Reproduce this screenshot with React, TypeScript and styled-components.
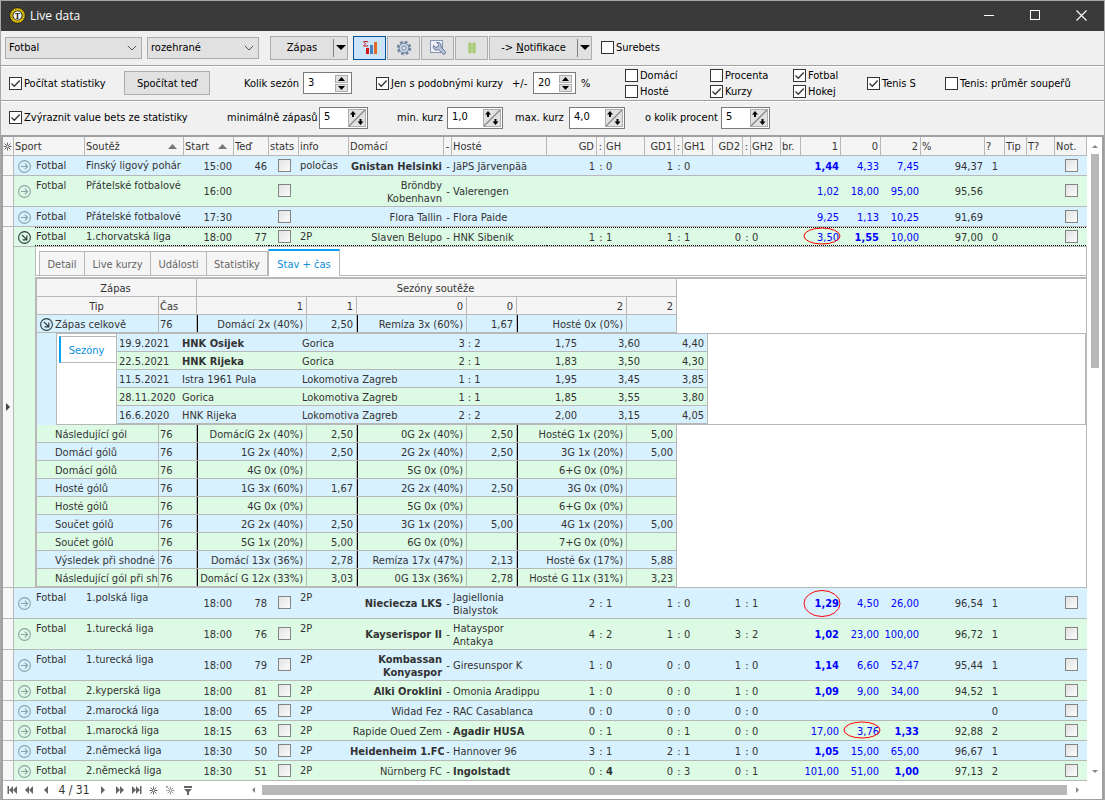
import React from "react";
import styled, { createGlobalStyle, css } from "styled-components";

const LINE = "#b8b8b8";
const BLUE_ROW = "#d8f1ff";
const GREEN_ROW = "#ddfbe4";
const HEAD = "#f5f5f5";
const FONT = '"DejaVu Sans Condensed", "Noto Sans", sans-serif';

type Tone = "blue" | "green";
const toneColor = (t: Tone) => (t === "blue" ? BLUE_ROW : GREEN_ROW);

const GlobalStyle = createGlobalStyle`
  *, *::before, *::after { box-sizing: border-box; }
  body { margin: 0; background: #fff; }
  button, input, select { font: inherit; color: inherit; margin: 0; }
`;

/* ---------- window frame ---------- */

const Window = styled.div`
  display: flex;
  flex-direction: column;
  min-height: 100vh;
  border: 1px solid #a8a8a8;
  background: #f0f0f0;
  font: 11px/13px ${FONT};
  color: #000;
`;

const TitleBar = styled.header`
  display: flex;
  align-items: center;
  height: 30px;
  padding: 0 0 1px 8px;
  background: #3a3a3a;
  color: #fff;
`;

const Title = styled.h1`
  flex: 1;
  margin: 0 0 0 4px;
  font: 12px/16px "Open Sans", "Noto Sans", sans-serif;
`;

const WindowButton = styled.button`
  display: grid;
  place-items: center;
  width: 46px;
  height: 28px;
  padding: 0;
  border: 0;
  background: transparent;
  color: #fff;
`;

/* ---------- tool bars ---------- */

const Bar = styled.div<{ $columns: string; $height: number; $last?: boolean }>`
  display: grid;
  grid-template-columns: ${(p) => p.$columns};
  align-items: center;
  height: ${(p) => p.$height}px;
  white-space: nowrap;
  ${(p) =>
    !p.$last &&
    css`
      border-bottom: 1px solid #fff;
      box-shadow: inset 0 -1px #a0a0a0;
    `}
`;

const MainBar = styled(Bar)`
  padding: 0 4px 2px;
`;

const OptionBar = styled(Bar)`
  padding: 0 8px 2px;
`;

const SelectBox = styled.span<{ $width: number }>`
  display: flex;
  align-items: center;
  width: ${(p) => p.$width}px;
  height: 22px;
  border: 1px solid #adadad;
  background: #e1e1e1;

  select {
    flex: 1;
    height: 20px;
    padding: 0 0 0 3px;
    border: 0;
    background: transparent;
    appearance: none;
  }
  svg {
    margin: 0 4px 0 -20px;
    pointer-events: none;
  }
`;

const PushButton = styled.button<{ $width: number }>`
  width: ${(p) => p.$width}px;
  height: 24px;
  padding: 0;
  border: 1px solid #adadad;
  background: #e1e1e1;
`;

const SplitButton = styled.div<{ $width: number }>`
  display: flex;
  width: ${(p) => p.$width}px;
  height: 24px;
  border: 1px solid #adadad;
  background: #e1e1e1;

  button {
    padding: 0;
    border: 0;
    background: transparent;
  }
  button:first-child {
    flex: 1;
  }
  button:last-child {
    display: grid;
    place-items: center;
    width: 14px;
    margin: 2px 0;
    border-left: 1px solid #808080;
  }
`;

const IconButton = styled.button<{ $active?: boolean }>`
  display: grid;
  place-items: center;
  width: 33px;
  height: 24px;
  padding: 0;
  border: 1px solid ${(p) => (p.$active ? "#00559b" : "#adadad")};
  background: ${(p) => (p.$active ? "#cce4f7" : "#e1e1e1")};
`;

const CheckLabel = styled.label`
  display: flex;
  align-items: center;
  gap: 2px;
`;

const checkMark = `url("data:image/svg+xml,%3Csvg xmlns='http://www.w3.org/2000/svg' viewBox='0 0 11 11'%3E%3Cpath d='M1.5 5.5l2.8 2.8 5.4-5.8' fill='none' stroke='%23333' stroke-width='1.3'/%3E%3C/svg%3E")`;

const CheckInput = styled.input.attrs({ type: "checkbox" })`
  appearance: none;
  flex: none;
  width: 13px;
  height: 13px;
  border: 1px solid #333;
  background: #fff;

  &:checked {
    background: #fff ${checkMark} center / 11px 11px no-repeat;
  }
`;

const GridCheck = styled.input.attrs({ type: "checkbox" })`
  appearance: none;
  display: block;
  width: 13px;
  height: 13px;
  margin: 0 auto 2px;
  border: 1px solid #848484;
  background: linear-gradient(135deg, #e2e2e2, #fbfbfb);
`;

const CheckPair = styled.div`
  display: grid;
  gap: 3px;
`;

const SpinBox = styled.span<{ $width: number }>`
  display: flex;
  align-items: center;
  width: ${(p) => p.$width}px;
  height: 22px;
  border: 1px solid #7a7a7a;
  background: #fff;

  input {
    flex: 1;
    min-width: 0;
    height: 18px;
    padding: 0 0 2px 4px;
    border: 0;
    outline: 0;
    background: transparent;
  }
`;

const StackedArrows = styled.span`
  display: grid;
  gap: 1px;
  margin-right: 3px;

  button {
    display: grid;
    place-items: center;
    width: 13px;
    height: 8px;
    padding: 0;
    border: 1px solid #adadad;
    background: #e1e1e1;
  }
`;

const DiagonalArrows = styled.span`
  position: relative;
  display: flex;
  width: 18px;
  height: 18px;
  margin-right: 1px;

  svg {
    position: absolute;
    inset: 0;
    pointer-events: none;
  }
  button {
    width: 9px;
    padding: 0;
    border: 0;
    background: #e1e1e1;
  }
`;

/* ---------- match grid ---------- */

const GridFrame = styled.main`
  display: flex;
  flex: 1;
  border: 2px solid #a0a0a0;
  border-bottom: 0;
  background: #fff;
  color: #333;
`;

const TableBox = styled.div`
  flex: 1;
  min-width: 0;
`;

const MatchTable = styled.table`
  width: 100%;
  table-layout: fixed;
  border-collapse: separate;
  border-spacing: 0;
  white-space: nowrap;
`;

const HeadCell = styled.th<{ $align?: string }>`
  height: 19px;
  padding: 1px 2px 0 1px;
  overflow: hidden;
  border: 0 solid ${LINE};
  border-width: 0 1px 1px 0;
  background: ${HEAD};
  font-weight: normal;
  text-align: ${(p) => p.$align || "left"};

  > svg {
    display: block;
  }
`;

const NarrowHead = styled(HeadCell)`
  padding-right: 0;
  padding-left: 0;
`;

const HeadSort = styled.span`
  display: flex;
  align-items: center;
  justify-content: space-between;
  padding-right: 4px;
`;

const MatchRow = styled.tr<{ $tone: Tone; $tall?: boolean }>`
  height: ${(p) => (p.$tall ? 31 : 20)}px;
  background: ${(p) => toneColor(p.$tone)};
`;

const Cell = styled.td<{
  $align?: string;
  $top?: boolean;
  $bold?: boolean;
  $odd?: boolean;
  $focus?: boolean;
  $wrap?: boolean;
}>`
  padding: ${(p) => (p.$top ? "3px" : "1px")} ${(p) => (p.$align === "right" ? "2px" : "1px")} 0 1px;
  overflow: hidden;
  border-bottom: 1px solid ${LINE};
  text-align: ${(p) => p.$align || "left"};
  vertical-align: ${(p) => (p.$top ? "top" : "middle")};
  font-weight: ${(p) => (p.$bold ? "bold" : "normal")};
  white-space: ${(p) => (p.$wrap ? "pre" : "nowrap")};
  ${(p) =>
    p.$odd &&
    css`
      color: #00f;
      overflow: visible;
    `}
  ${(p) =>
    p.$focus &&
    css`
      background-image: linear-gradient(90deg, #000 50%, transparent 50%),
        linear-gradient(90deg, #000 50%, transparent 50%);
      background-size: 2px 1px;
      background-repeat: repeat-x;
      background-position: left top, left bottom;
    `}
`;

const IndicatorCell = styled.td`
  padding: 0;
  border: 0 solid ${LINE};
  border-width: 0 1px 1px 0;
  background: #f7f7f7;
  text-align: center;

  svg {
    display: block;
    margin: 0 auto;
  }
`;

const ExpandButton = styled.button<{ $open?: boolean }>`
  display: block;
  margin: 0 auto;
  padding: 0;
  border: 0;
  background: transparent;
  color: ${(p) => (p.$open ? "#2c3a3c" : "#8ba2a6")};

  svg {
    display: block;
  }
`;

const Marked = styled.span`
  position: relative;
  display: inline-block;

  svg {
    position: absolute;
    top: 50%;
    right: -2px;
    transform: translateY(-50%);
    overflow: visible;
  }
`;

/* ---------- detail panel ---------- */

const IndentCell = styled.td`
  padding: 0;
  border-bottom: 1px solid ${LINE};
  background: ${GREEN_ROW};
`;

const DetailCell = styled.td`
  padding: 0;
  border-right: 1px solid ${LINE};
  border-bottom: 1px solid ${LINE};
  background: #fff;
`;

const TabStrip = styled.div`
  display: flex;
  align-items: flex-end;
  height: 29px;
  padding-left: 3px;
  border-bottom: 1px solid ${LINE};
  border-left: 1px solid ${LINE};
`;

const Tab = styled.button<{ $active?: boolean; $width: number }>`
  width: ${(p) => p.$width}px;
  height: ${(p) => (p.$active ? 27 : 24)}px;
  margin-bottom: ${(p) => (p.$active ? -1 : 0)}px;
  padding: 2px 0 0;
  border: 1px solid ${LINE};
  border-bottom: 0;
  border-left-width: ${(p) => (p.$active ? 1 : 0)}px;
  background: ${(p) => (p.$active ? "#fff" : HEAD)};
  color: #666;
  ${(p) =>
    p.$active &&
    css`
      border-top: 2px solid #0aa0f0;
      color: #0a8fdc;
    `}
  &:first-child {
    border-left-width: 1px;
  }
`;

const DetailFrame = styled.div`
  margin-top: 1px;
  border: 2px solid ${LINE};
  border-width: 2px 0 0 2px;
`;

const StatTable = styled.table`
  width: 100%;
  table-layout: fixed;
  border-collapse: separate;
  border-spacing: 0;
`;

const StatHead = styled.th<{ $align?: string }>`
  height: 18px;
  padding: 1px 3px 0 1px;
  border: 0 solid ${LINE};
  border-width: 0 1px 1px 0;
  background: ${HEAD};
  font-weight: normal;
  text-align: ${(p) => p.$align || "left"};
`;

const StatRow = styled.tr<{ $tone: Tone }>`
  height: 18px;
  background: ${(p) => toneColor(p.$tone)};
`;

const StatCell = styled.td<{ $align?: string; $mark?: boolean }>`
  padding: 1px 3px 0 1px;
  overflow: hidden;
  border: 0 solid ${LINE};
  border-width: 0 1px 1px 0;
  text-align: ${(p) => p.$align || "left"};
  ${(p) => p.$mark && "box-shadow: inset 1px 0 #000;"}
`;

const TipCell = styled(StatCell)`
  padding-right: 0;
  padding-left: 0;
`;

const TipText = styled.span`
  display: flex;
  align-items: center;

  > span {
    width: 18px;
    flex: none;
  }
`;

const Spare = styled.td`
  padding: 0;
  background: #fff;
`;

const SeasonCell = styled.td`
  height: 92px;
  padding: 0 0 0 19px;
  background: ${BLUE_ROW};
`;

const SeasonFrame = styled.div`
  display: flex;
  height: 92px;
  border: 1px solid ${LINE};
  background: #fff;
`;

const SeasonTabs = styled.div`
  width: 59px;
  padding: 2px 0 0 2px;
`;

const SeasonTab = styled.button`
  width: 57px;
  height: 27px;
  padding: 1px 4px 0 0;
  border: 1px solid ${LINE};
  border-width: 1px 0;
  border-left: 2px solid #0aa0f0;
  background: #fff;
  color: #0a8fdc;
`;

const SeasonTable = styled.table`
  width: 592px;
  table-layout: fixed;
  border-collapse: separate;
  border-spacing: 0;
  border: 0 solid ${LINE};
  border-width: 0 1px;
`;

const SeasonData = styled.td<{ $align?: string; $bold?: boolean }>`
  padding: 1px 3px 0 2px;
  border-bottom: 1px solid ${LINE};
  text-align: ${(p) => p.$align || "left"};
  font-weight: ${(p) => (p.$bold ? "bold" : "normal")};
`;

/* ---------- scroll bars and navigator ---------- */

const VScroll = styled.div`
  display: flex;
  flex-direction: column;
  align-items: center;
  width: 15px;
  padding: 8px 0 8px 1px;
`;

const VTrack = styled.div`
  flex: 1;
  width: 8px;
  margin: 6px 0;
`;

const VThumb = styled.div`
  height: 35%;
  background: ${LINE};
`;

const Footer = styled.footer`
  display: flex;
  height: 19px;
  border: 2px solid #a0a0a0;
  border-width: 0 2px 1px;
  background: #fff;
  color: #333;
`;

const Navigator = styled.nav`
  display: flex;
  align-items: center;
  width: 242px;

  button {
    display: grid;
    place-items: center;
    width: 17px;
    height: 16px;
    padding: 0;
    border: 0;
    background: transparent;
    color: #666;
  }
`;

const Position = styled.span`
  width: 40px;
  font-size: 12px;
  text-align: center;
`;

const HScroll = styled.div`
  display: flex;
  flex: 1;
  align-items: center;
  gap: 7px;
  padding: 0 23px 0 7px;
`;

const HThumb = styled.div`
  flex: 1;
  height: 10px;
  margin-right: 2px;
  background: ${LINE};
`;

/* ---------- drawings ---------- */

const Triangle = ({ dir, w, h, color = "#000" }: { dir: "up" | "down" | "left" | "right"; w: number; h: number; color?: string }) => {
  const points = {
    up: `0,${h} ${w},${h} ${w / 2},0`,
    down: `0,0 ${w},0 ${w / 2},${h}`,
    left: `${w},0 ${w},${h} 0,${h / 2}`,
    right: `0,0 0,${h} ${w},${h / 2}`,
  }[dir];
  return (
    <svg width={w} height={h} viewBox={`0 0 ${w} ${h}`} aria-hidden="true">
      <polygon points={points} fill={color} />
    </svg>
  );
};

const Chevron = () => (
  <svg width="10" height="6" viewBox="0 0 10 6" aria-hidden="true">
    <path d="M0.8 0.8 5 5 9.2 0.8" fill="none" stroke="#555" strokeWidth="1" />
  </svg>
);

const Asterisk = ({ faded }: { faded?: boolean }) => (
  <svg width="9" height="9" viewBox="0 0 9 9" aria-hidden="true" stroke={faded ? "#999" : "#666"} strokeWidth="1">
    <path d="M4.5 0.5v2.5M4.5 6v2.5M0.5 4.5H3M6 4.5h2.5M1.5 1.5l2 2M5.5 5.5l2 2M7.5 1.5l-2 2M3.5 5.5l-2 2" />
    <circle cx="4.5" cy="4.5" r="1.4" fill="none" />
    {faded && <path d="M0 0.5h2M0.5 0v2" />}
  </svg>
);

const CircleArrow = ({ open }: { open?: boolean }) => (
  <svg width="13" height="13" viewBox="0 0 13 13" fill="none" stroke="currentColor" aria-hidden="true">
    <circle cx="6.5" cy="6.5" r="5.9" strokeWidth="1.1" />
    {open ? (
      <path d="M4 4l4.6 4.6M8.8 4.6v4.2H4.6" strokeWidth="1.2" />
    ) : (
      <path d="M3 6.5h6.5M6.8 3.7l2.8 2.8-2.8 2.8" strokeWidth="1.1" />
    )}
  </svg>
);

const Logo = () => (
  <svg width="17" height="17" viewBox="0 0 17 17" aria-hidden="true">
    <circle cx="8.5" cy="8.5" r="7.8" fill="#e3c50f" stroke="#111" strokeWidth="0.8" />
    <circle cx="8.5" cy="8.5" r="6.6" fill="none" stroke="#6b5c00" strokeWidth="1" strokeDasharray="1 1.6" />
    <circle cx="8.5" cy="8.5" r="5.1" fill="#111" />
    <circle cx="8.5" cy="8.5" r="4.2" fill="#f2f2f2" />
    <text x="8.5" y="11.5" textAnchor="middle" fontSize="8" fontWeight="bold" fontFamily="Liberation Serif, serif" fill="#111">
      T
    </text>
  </svg>
);

const ChartIcon = () => (
  <svg width="16" height="16" viewBox="0 0 16 16" aria-hidden="true">
    <path d="M5.6 2.4V1.5H1.6L3.5 3.8 1.6 6.1h4V5.2" fill="none" stroke="#d0202a" strokeWidth="1" />
    <rect x="4" y="8" width="3" height="6" fill="#d01818" />
    <rect x="8" y="5" width="3" height="9" fill="#4a7fc0" />
    <rect x="12" y="2" width="3" height="12" fill="#e06a24" />
  </svg>
);

const GearIcon = () => (
  <svg width="16" height="16" viewBox="0 0 16 16" aria-hidden="true">
    <circle cx="8" cy="8" r="5.9" fill="none" stroke="#6e82a0" strokeWidth="2.6" strokeDasharray="2.7 1.93" />
    <circle cx="8" cy="8" r="4.9" fill="#cbd7e6" stroke="#6e82a0" strokeWidth="1" />
    <circle cx="8" cy="8" r="2.1" fill="#e8e8e8" stroke="#6e82a0" strokeWidth="1" />
  </svg>
);

const WrenchIcon = () => (
  <svg width="16" height="16" viewBox="0 0 16 16" aria-hidden="true">
    <rect x="0.5" y="0.5" width="12" height="12" fill="#eef2f8" stroke="#8796b0" />
    <path
      d="M6.6 2.6A3.4 3.4 0 0 1 11 7l4 4.2a1.7 1.7 0 0 1-2.4 2.6L8.6 9.6A3.5 3.5 0 0 1 3.4 5.6L5.8 7.3 8 6.7 8.5 4.5z"
      fill="#b4c2d8"
      stroke="#5d6f8f"
      strokeWidth="0.9"
    />
  </svg>
);

const PauseIcon = () => (
  <svg width="8" height="12" viewBox="0 0 8 12" aria-hidden="true" fill="#b5d67c" stroke="#93bd58" strokeWidth="0.8">
    <rect x="0.9" y="0.9" width="2.2" height="10" rx="0.6" />
    <rect x="4.9" y="0.9" width="2.2" height="10" rx="0.6" />
  </svg>
);

const DiagonalIcon = () => (
  <svg width="18" height="18" viewBox="0 0 18 18" aria-hidden="true">
    <rect x="0.5" y="0.5" width="17" height="17" fill="none" stroke="#adadad" />
    <path d="M1 17 17 1" stroke="#8a8a8a" strokeWidth="1.3" />
    <path d="M5 2l3 3.500H6V8H4V5.500H2zM12.500 16l3-3.500h-2V10h-2v2.500h-2z" fill="#000" />
  </svg>
);

const NavIcon = ({ kind }: { kind: string }) => {
  const shapes: Record<string, React.ReactNode> = {
    first: <path d="M0.5 0v8H2V0zM6 0v8L2 4zM10 0v8L6 4z" />,
    priorPage: <path d="M5 0v8L1 4zM9 0v8L5 4z" />,
    prior: <path d="M7 0v8L3 4z" />,
    next: <path d="M3 0v8l4-4z" />,
    nextPage: <path d="M1 0v8l4-4zM5 0v8l4-4z" />,
    last: <path d="M0 0v8l4-4zM4 0v8l4-4zM8 0v8h1.5V0z" />,
    filter: <path d="M1 0h8v2H1zM1 3h8L6 6v3H4V6z" />,
  };
  return (
    <svg width="10" height="9" viewBox="0 0 10 9" fill="currentColor" aria-hidden="true">
      {shapes[kind]}
    </svg>
  );
};

/* ---------- small composites ---------- */

const Check = ({ label, checked }: { label: string; checked?: boolean }) => (
  <CheckLabel>
    <CheckInput defaultChecked={checked} />
    {label}
  </CheckLabel>
);

const Dropdown = ({ label, options, width }: { label: string; options: string[]; width: number }) => (
  <SelectBox $width={width}>
    <select aria-label={label}>
      {options.map((o) => (
        <option key={o}>{o}</option>
      ))}
    </select>
    <Chevron />
  </SelectBox>
);

const Spin = ({ id, value, width, diagonal }: { id: string; value: string; width: number; diagonal?: boolean }) => (
  <SpinBox $width={width}>
    <input id={id} defaultValue={value} />
    {diagonal ? (
      <DiagonalArrows>
        <button aria-label="Zvýšit" />
        <button aria-label="Snížit" />
        <DiagonalIcon />
      </DiagonalArrows>
    ) : (
      <StackedArrows>
        <button aria-label="Zvýšit">
          <Triangle dir="up" w={7} h={4} />
        </button>
        <button aria-label="Snížit">
          <Triangle dir="down" w={7} h={4} />
        </button>
      </StackedArrows>
    )}
  </SpinBox>
);

/* ---------- data ---------- */

type Match = {
  league: string;
  start: string;
  now?: string;
  info?: string;
  home: string;
  away: string;
  win?: "home" | "away";
  scores: (string | null)[];
  boldGuest?: boolean;
  odds: string[];
  fav?: number;
  ring?: number;
  pct: string;
  q?: string;
  tall?: boolean;
};

const before: Match[] = [
  { league: "Finský ligový pohár", start: "15:00", now: "46", info: "poločas", home: "Gnistan Helsinki", away: "JäPS Järvenpää", win: "home", scores: ["1:0", "1:0", null], odds: ["1,44", "4,33", "7,45"], fav: 0, pct: "94,37", q: "1" },
  { league: "Přátelské fotbalové", start: "16:00", home: "Bröndby\nKobenhavn", away: "Valerengen", scores: [null, null, null], odds: ["1,02", "18,00", "95,00"], pct: "95,56", tall: true },
  { league: "Přátelské fotbalové", start: "17:30", home: "Flora Tallin", away: "Flora Paide", scores: [null, null, null], odds: ["9,25", "1,13", "10,25"], pct: "91,69" },
  { league: "1.chorvatská liga", start: "18:00", now: "77", info: "2P", home: "Slaven Belupo", away: "HNK Sibenik", scores: ["1:1", "1:1", "0:0"], odds: ["3,50", "1,55", "10,00"], fav: 1, ring: 0, pct: "97,00", q: "0" },
];

const after: Match[] = [
  { league: "1.polská liga", start: "18:00", now: "78", info: "2P", home: "Nieciecza LKS", away: "Jagiellonia\nBialystok", win: "home", scores: ["2:1", "1:0", "1:1"], odds: ["1,29", "4,50", "26,00"], fav: 0, ring: 0, pct: "96,54", q: "1", tall: true },
  { league: "1.turecká liga", start: "18:00", now: "76", info: "2P", home: "Kayserispor II", away: "Hatayspor\nAntakya", win: "home", scores: ["4:2", "1:0", "3:2"], odds: ["1,02", "23,00", "100,00"], fav: 0, pct: "96,72", q: "1", tall: true },
  { league: "1.turecká liga", start: "18:00", now: "79", info: "2P", home: "Kombassan\nKonyaspor", away: "Giresunspor K", win: "home", scores: ["1:0", "0:0", "1:0"], odds: ["1,14", "6,60", "52,47"], fav: 0, pct: "95,44", q: "1", tall: true },
  { league: "2.kyperská liga", start: "18:00", now: "81", info: "2P", home: "Alki Oroklini", away: "Omonia Aradippu", win: "home", scores: ["1:0", "0:0", "1:0"], odds: ["1,09", "9,00", "34,00"], fav: 0, pct: "94,52", q: "1" },
  { league: "2.marocká liga", start: "18:00", now: "65", info: "2P", home: "Widad Fez", away: "RAC Casablanca", scores: ["0:0", "0:0", "0:0"], odds: ["", "", ""], pct: "", q: "0" },
  { league: "1.marocká liga", start: "18:15", now: "63", info: "2P", home: "Rapide Oued Zem", away: "Agadir HUSA", win: "away", scores: ["0:1", "0:1", "0:0"], odds: ["17,00", "3,76", "1,33"], fav: 2, ring: 1, pct: "92,88", q: "2" },
  { league: "2.německá liga", start: "18:30", now: "50", info: "2P", home: "Heidenheim 1.FC", away: "Hannover 96", win: "home", scores: ["3:1", "2:1", "1:0"], odds: ["1,05", "15,00", "65,00"], fav: 0, pct: "96,67", q: "1" },
  { league: "2.německá liga", start: "18:30", now: "51", info: "2P", home: "Nürnberg FC", away: "Ingolstadt", win: "away", scores: ["0:4", "0:3", "0:1"], boldGuest: true, odds: ["101,00", "51,00", "1,00"], fav: 2, pct: "97,13", q: "2" },
];

/* Zero marks the guest team column, which takes the remaining width. */
const columnWidths = [11, 21, 50, 99, 50, 35, 30, 50, 95, 8, 0, 50, 8, 40, 30, 8, 30, 30, 8, 30, 20, 40, 40, 40, 64, 20, 22, 28, 32];

const stats: string[][] = [
  ["Následující gól", "DomácíG 2x (40%)", "2,50", "0G 2x (40%)", "2,50", "HostéG 1x (20%)", "5,00"],
  ["Domácí gólů", "1G 2x (40%)", "2,50", "2G 2x (40%)", "2,50", "3G 1x (20%)", "5,00"],
  ["Domácí gólů", "4G 0x (0%)", "", "5G 0x (0%)", "", "6+G 0x (0%)", ""],
  ["Hosté gólů", "1G 3x (60%)", "1,67", "2G 2x (40%)", "2,50", "3G 0x (0%)", ""],
  ["Hosté gólů", "4G 0x (0%)", "", "5G 0x (0%)", "", "6+G 0x (0%)", ""],
  ["Součet gólů", "2G 2x (40%)", "2,50", "3G 1x (20%)", "5,00", "4G 1x (20%)", "5,00"],
  ["Součet gólů", "5G 1x (20%)", "5,00", "6G 0x (0%)", "", "7+G 0x (0%)", ""],
  ["Výsledek při shodné", "Domácí 13x (36%)", "2,78", "Remíza 17x (47%)", "2,13", "Hosté 6x (17%)", "5,88"],
  ["Následující gól při sh", "Domácí G 12x (33%)", "3,03", "0G 13x (36%)", "2,78", "Hosté G 11x (31%)", "3,23"],
];

const seasons: string[][] = [
  ["19.9.2021", "HNK Osijek", "Gorica", "3 : 2", "1,75", "3,60", "4,40"],
  ["22.5.2021", "HNK Rijeka", "Gorica", "2 : 1", "1,83", "3,50", "4,30"],
  ["11.5.2021", "Istra 1961 Pula", "Lokomotiva Zagreb", "1 : 1", "1,95", "3,45", "3,85"],
  ["28.11.2020", "Gorica", "Lokomotiva Zagreb", "1 : 1", "1,85", "3,55", "3,80"],
  ["16.6.2020", "HNK Rijeka", "Lokomotiva Zagreb", "2 : 2", "2,00", "3,15", "4,05"],
];

/* ---------- grid parts ---------- */

const MatchLine = ({ m, tone, open }: { m: Match; tone: Tone; open?: boolean }) => (
  <MatchRow $tone={tone} $tall={m.tall}>
    <IndicatorCell rowSpan={open ? 2 : 1}>{open && <Triangle dir="right" w={4} h={8} color="#444" />}</IndicatorCell>
    <Cell>
      <ExpandButton $open={open} aria-label={open ? "Sbalit" : "Rozbalit"}>
        <CircleArrow open={open} />
      </ExpandButton>
    </Cell>
    <Cell $top $focus={open}>Fotbal</Cell>
    <Cell $top $focus={open}>{m.league}</Cell>
    <Cell $align="right" $focus={open}>{m.start}</Cell>
    <Cell $align="right" $focus={open}>{m.now}</Cell>
    <Cell $focus={open}><GridCheck aria-label={`Statistiky ${m.home}`} /></Cell>
    <Cell $top $focus={open}>{m.info}</Cell>
    <Cell $align="right" $wrap $focus={open} $bold={m.win === "home"}>{m.home}</Cell>
    <Cell $align="center" $focus={open}>-</Cell>
    <Cell $wrap $focus={open} $bold={m.win === "away"}>{m.away}</Cell>
    {m.scores.map((s, i) => {
      const [h, g] = s ? s.split(":") : ["", ""];
      return (
        <React.Fragment key={i}>
          <Cell $align="right" $focus={open}>{h}</Cell>
          <Cell $align="center" $focus={open}>{s ? ":" : ""}</Cell>
          <Cell $focus={open} $bold={m.boldGuest && i === 0}>{g}</Cell>
        </React.Fragment>
      );
    })}
    <Cell $focus={open} />
    {m.odds.map((o, i) => (
      <Cell key={i} $align="right" $odd $focus={open} $bold={m.fav === i}>
        {m.ring === i ? (
          <Marked>
            {o}
            <svg width="38" height={m.tall ? 27 : 16} aria-hidden="true">
              <ellipse cx="19" cy={m.tall ? 13 : 7} rx="18" ry={m.tall ? 13 : 8} fill="none" stroke="#f00" />
            </svg>
          </Marked>
        ) : (
          o
        )}
      </Cell>
    ))}
    <Cell $align="right" $focus={open}>{m.pct}</Cell>
    <Cell $align="center" $focus={open}>{m.q}</Cell>
    <Cell $focus={open} />
    <Cell $focus={open} />
    <Cell $focus={open}><GridCheck aria-label={`Notifikace ${m.home}`} /></Cell>
  </MatchRow>
);

const Seasons = () => (
  <SeasonFrame>
    <SeasonTabs>
      <SeasonTab>Sezóny</SeasonTab>
    </SeasonTabs>
    <SeasonTable>
      <colgroup>
        {[63, 120, 142, 56, 82, 63, 64].map((w, i) => (
          <col key={i} width={w} />
        ))}
      </colgroup>
      <tbody>
        {seasons.map((r, i) => (
          <StatRow key={r[0]} $tone={i % 2 ? "green" : "blue"}>
            {r.map((v, c) => (
              <SeasonData key={c} $align={c === 3 ? "center" : c > 3 ? "right" : "left"} $bold={c === 1 && i < 2}>
                {v}
              </SeasonData>
            ))}
          </StatRow>
        ))}
      </tbody>
    </SeasonTable>
  </SeasonFrame>
);

const StatLine = ({ row, tone, open }: { row: string[]; tone: Tone; open?: boolean }) => (
  <StatRow $tone={tone}>
    <TipCell>
      <TipText>
        <span>
          {open && (
            <ExpandButton $open aria-label="Sbalit">
              <CircleArrow open />
            </ExpandButton>
          )}
        </span>
        {row[0]}
      </TipText>
    </TipCell>
    <StatCell>76</StatCell>
    {row.slice(1).map((v, i) => (
      <StatCell key={i} $align="right" $mark={i % 2 === 0}>
        {v}
      </StatCell>
    ))}
    <Spare />
  </StatRow>
);

const Detail = () => (
  <>
    <TabStrip>
      <Tab $width={46}>Detail</Tab>
      <Tab $width={66}>Live kurzy</Tab>
      <Tab $width={56}>Události</Tab>
      <Tab $width={61}>Statistiky</Tab>
      <Tab $width={72} $active>Stav + čas</Tab>
    </TabStrip>
    <DetailFrame>
      <StatTable>
        <colgroup>
          {[122, 38, 110, 50, 110, 50, 110, 50].map((w, i) => (
            <col key={i} width={w} />
          ))}
          <col />
        </colgroup>
        <thead>
          <tr>
            <StatHead colSpan={2} $align="center">Zápas</StatHead>
            <StatHead colSpan={6} $align="center">Sezóny soutěže</StatHead>
            <Spare />
          </tr>
          <tr>
            <StatHead $align="center">Tip</StatHead>
            <StatHead>Čas</StatHead>
            {["1", "1", "0", "0", "2", "2"].map((v, i) => (
              <StatHead key={i} $align="right">{v}</StatHead>
            ))}
            <Spare />
          </tr>
        </thead>
        <tbody>
          <StatLine open tone="blue" row={["Zápas celkově", "Domácí 2x (40%)", "2,50", "Remíza 3x (60%)", "1,67", "Hosté 0x (0%)", ""]} />
          <tr>
            <SeasonCell colSpan={9}>
              <Seasons />
            </SeasonCell>
          </tr>
          {stats.map((row, i) => (
            <StatLine key={i} row={row} tone={i % 2 ? "blue" : "green"} />
          ))}
        </tbody>
      </StatTable>
    </DetailFrame>
  </>
);

const headers: [string, string?][] = [
  ["info"], ["Domácí"], ["-", "center"], ["Hosté"],
  ["GD", "right"], [":", "center"], ["GH"],
  ["GD1", "right"], [":", "center"], ["GH1"],
  ["GD2", "right"], [":", "center"], ["GH2"],
  ["br."], ["1", "right"], ["0", "right"], ["2", "right"],
  ["%"], ["?"], ["Tip"], ["T?"], ["Not."],
];

export default function App() {
  return (
    <Window>
      <GlobalStyle />
      <TitleBar>
        <Logo />
        <Title>Live data</Title>
        <WindowButton aria-label="Minimalizovat">
          <svg width="11" height="11" aria-hidden="true"><path d="M0 5.5h10" stroke="#fff" /></svg>
        </WindowButton>
        <WindowButton aria-label="Maximalizovat">
          <svg width="11" height="11" aria-hidden="true"><rect x="0.5" y="0.5" width="9" height="9" fill="none" stroke="#fff" /></svg>
        </WindowButton>
        <WindowButton aria-label="Zavřít">
          <svg width="11" height="11" aria-hidden="true"><path d="M0.5 0.5l10 10M10.5 0.5l-10 10" stroke="#fff" strokeWidth="1.1" /></svg>
        </WindowButton>
      </TitleBar>

      <MainBar $height={36} $columns="142px 123px 83px 34px 34px 34px 34px 112px 1fr">
        <Dropdown label="Sport" width={137} options={["Fotbal", "Hokej", "Tenis"]} />
        <Dropdown label="Stav zápasů" width={112} options={["rozehrané", "všechny"]} />
        <SplitButton $width={78}>
          <button>Zápas</button>
          <button aria-label="Nabídka zápasu"><Triangle dir="down" w={10} h={5} /></button>
        </SplitButton>
        <IconButton $active aria-label="Statistiky"><ChartIcon /></IconButton>
        <IconButton aria-label="Nastavení"><GearIcon /></IconButton>
        <IconButton aria-label="Nástroje"><WrenchIcon /></IconButton>
        <IconButton aria-label="Pozastavit"><PauseIcon /></IconButton>
        <SplitButton $width={103}>
          <button>-&gt; <u>N</u>otifikace</button>
          <button aria-label="Nabídka notifikací"><Triangle dir="down" w={10} h={5} /></button>
        </SplitButton>
        <Check label="Surebets" />
      </MainBar>

      <OptionBar $height={35} $columns="115px 120px 59px 73px 136px 21px 48px 44px 85px 83px 74px 78px 1fr">
        <Check label="Počítat statistiky" checked />
        <PushButton $width={86}>Spočítat teď</PushButton>
        <label htmlFor="seasons">Kolik sezón</label>
        <Spin id="seasons" value="3" width={49} />
        <Check label="Jen s podobnými kurzy" checked />
        <label htmlFor="tolerance">+/-</label>
        <Spin id="tolerance" value="20" width={43} />
        <span>%</span>
        <CheckPair><Check label="Domácí" /><Check label="Hosté" /></CheckPair>
        <CheckPair><Check label="Procenta" /><Check label="Kurzy" checked /></CheckPair>
        <CheckPair><Check label="Fotbal" checked /><Check label="Hokej" checked /></CheckPair>
        <Check label="Tenis S" checked />
        <Check label="Tenis: průměr soupeřů" />
      </OptionBar>

      <OptionBar $height={33} $last $columns="218px 92px 78px 50px 68px 54px 76px 76px 1fr">
        <Check label="Zvýraznit value bets ze statistiky" checked />
        <label htmlFor="minMatches">minimálně zápasů</label>
        <Spin id="minMatches" value="5" width={49} diagonal />
        <label htmlFor="minOdds">min. kurz</label>
        <Spin id="minOdds" value="1,0" width={56} diagonal />
        <label htmlFor="maxOdds">max. kurz</label>
        <Spin id="maxOdds" value="4,0" width={56} diagonal />
        <label htmlFor="percent">o kolik procent</label>
        <Spin id="percent" value="5" width={49} diagonal />
      </OptionBar>

      <GridFrame>
        <TableBox>
          <MatchTable>
            <colgroup>
              {columnWidths.map((w, i) => (w ? <col key={i} width={w} /> : <col key={i} />))}
            </colgroup>
            <thead>
              <tr>
                <NarrowHead aria-label="Ukazatel"><Asterisk /></NarrowHead>
                <HeadCell colSpan={2}>Sport</HeadCell>
                <HeadCell><HeadSort>Soutěž <Triangle dir="up" w={9} h={5} color="#777" /></HeadSort></HeadCell>
                <HeadCell><HeadSort>Start <Triangle dir="up" w={9} h={5} color="#777" /></HeadSort></HeadCell>
                <HeadCell>Teď</HeadCell>
                <HeadCell>stats</HeadCell>
                {headers.map(([text, align], i) =>
                  align === "center" ? (
                    <NarrowHead key={i} $align={align}>{text}</NarrowHead>
                  ) : (
                    <HeadCell key={i} $align={align}>{text}</HeadCell>
                  )
                )}
              </tr>
            </thead>
            <tbody>
              {before.map((m, i) => (
                <MatchLine key={i} m={m} tone={i % 2 ? "green" : "blue"} open={i === 3} />
              ))}
              <tr>
                <IndentCell />
                <DetailCell colSpan={27}>
                  <Detail />
                </DetailCell>
              </tr>
              {after.map((m, i) => (
                <MatchLine key={i} m={m} tone={i % 2 ? "green" : "blue"} />
              ))}
            </tbody>
          </MatchTable>
        </TableBox>
        <VScroll>
          <Triangle dir="up" w={6} h={3} color="#888" />
          <VTrack><VThumb /></VTrack>
          <Triangle dir="down" w={6} h={3} color="#888" />
        </VScroll>
      </GridFrame>

      <Footer>
        <Navigator aria-label="Záznamy">
          <button aria-label="První"><NavIcon kind="first" /></button>
          <button aria-label="Předchozí stránka"><NavIcon kind="priorPage" /></button>
          <button aria-label="Předchozí"><NavIcon kind="prior" /></button>
          <Position>4 / 31</Position>
          <button aria-label="Další"><NavIcon kind="next" /></button>
          <button aria-label="Další stránka"><NavIcon kind="nextPage" /></button>
          <button aria-label="Poslední"><NavIcon kind="last" /></button>
          <button aria-label="Uložit záložku"><Asterisk /></button>
          <button aria-label="Přejít na záložku"><Asterisk faded /></button>
          <button aria-label="Filtr"><NavIcon kind="filter" /></button>
        </Navigator>
        <HScroll>
          <Triangle dir="left" w={3} h={6} color="#888" />
          <HThumb />
          <Triangle dir="right" w={3} h={6} color="#888" />
        </HScroll>
      </Footer>
    </Window>
  );
}
